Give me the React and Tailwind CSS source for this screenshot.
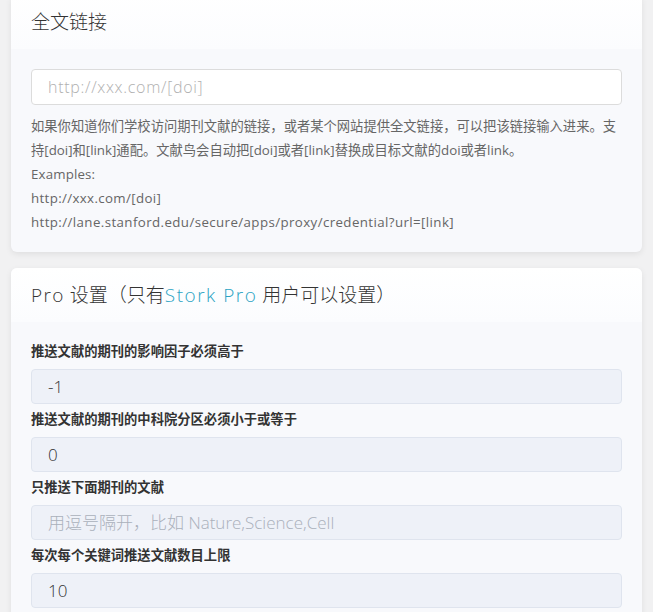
const font = "font-['Open_Sans','Noto_Sans_CJK_SC',sans-serif]";

function Card({ title, children, className = '' }) {
  return (
    <div className={`overflow-hidden rounded-md bg-[#f8f9fc] shadow-[0_2px_6px_rgba(0,0,0,0.08)] ${className}`}>
      <div className="flex h-[54px] items-center bg-gradient-to-b from-white to-[#fbfcfe] px-5 text-[19px] font-light text-[#333]">
        {title}
      </div>
      {children}
    </div>
  );
}

function Field({ label, value, placeholder }) {
  return (
    <div>
      <div className="mt-[6px] mb-[9px] text-[13.3px] leading-[18px] font-bold text-[#333]">{label}</div>
      <div className="flex h-[35px] items-center rounded-[4px] border border-[#dfe4ee] bg-[#eef1f8] px-4 text-[17px] font-light">
        {value ? <span className="text-[#333]">{value}</span> : <span className="text-[#aab0bb]">{placeholder}</span>}
      </div>
    </div>
  );
}

export default function App() {
  return (
    <div className={`min-h-[612px] overflow-hidden bg-[#f1f1f2] px-[11px] ${font}`}>
      <Card title="全文链接" className="-mt-[5px]">
        <div className="px-5 pt-[20px] pb-[18px]">
          <div className="flex h-[36px] items-center rounded-[4px] border border-[#dcdcdc] bg-white px-4 text-[16px] font-light tracking-[0.7px] text-[#b0b0b0]">
            http://xxx.com/[doi]
          </div>
          <div className="mt-[9px] text-[13.3px] leading-[24px] text-[#666]">
            <p>如果你知道你们学校访问期刊文献的链接，或者某个网站提供全文链接，可以把该链接输入进来。支持[doi]和[link]通配。文献鸟会自动把[doi]或者[link]替换成目标文献的doi或者link。</p>
            <p className="tracking-[0.15px]">Examples:</p>
            <p className="tracking-[0.35px]">http://xxx.com/[doi]</p>
            <p className="tracking-[0.4px]">http://lane.stanford.edu/secure/apps/proxy/credential?url=[link]</p>
          </div>
        </div>
      </Card>
      <Card
        className="mt-4"
        title={
          <span>
            <span className="tracking-[1.4px]">Pro</span> 设置（只有
            <span className="tracking-[1.5px] text-[#2ba3c3]">Stork Pro</span> 用户可以设置）
          </span>
        }
      >
        <div className="px-5 pt-[14px] pb-5">
          <Field label="推送文献的期刊的影响因子必须高于" value="-1" />
          <Field label="推送文献的期刊的中科院分区必须小于或等于" value="0" />
          <Field label="只推送下面期刊的文献" placeholder="用逗号隔开，比如 Nature,Science,Cell" />
          <Field label="每次每个关键词推送文献数目上限" value="10" />
        </div>
      </Card>
    </div>
  );
}
